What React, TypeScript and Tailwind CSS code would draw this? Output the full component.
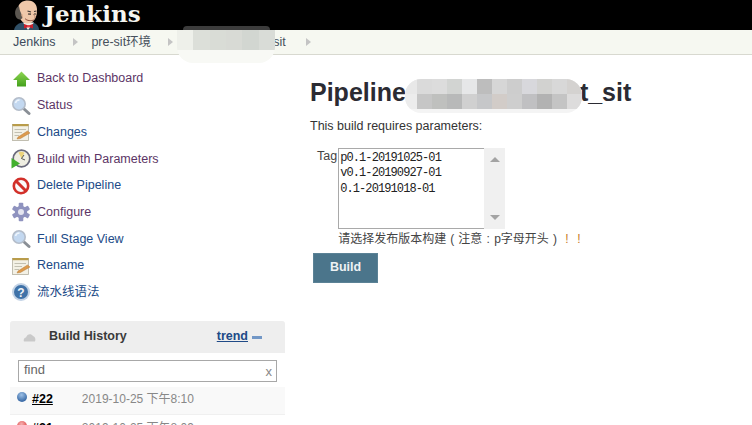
import React from 'react';

const SANS = "font-['Liberation_Sans','Noto_Sans_CJK_SC',sans-serif]";

const Logo = () => (
  <svg width="27" height="30" viewBox="0 0 27 30" className="shrink-0">
    <path d="M1 30 C2 25 6 22.5 11 22.5 L19 22.5 C23 23 26 26 26 30 Z" fill="#2f4f66" />
    <path d="M10 22.5 L15 30 L21 22.5 Z" fill="#f0efe8" />
    <path d="M5 9 C5 3 10 0.5 15 0.5 C21 0.5 24.5 5 24 11 C24 18 20 24 14 23.5 C9 23 6.5 19 6 15 C5 13 5 11 5 9 Z" fill="#efc8aa" />
    <path d="M3 17 C1 12 2.5 8 6 6 C6.5 9 7 11 8 13 L9.5 18 C8 20 4.5 20 3 17 Z" fill="#5b5650" />
    <path d="M9.5 14 C8 14.5 8 17 10 17.5 Z" fill="#d9a888" />
    <path d="M14.5 11 L18 12 M21 11.5 L23.5 11" stroke="#3a3633" strokeWidth="1.1" fill="none" />
    <path d="M15 14 L18 14.2" stroke="#2c2724" strokeWidth="1.2" />
    <circle cx="22" cy="14" r="0.8" fill="#222" />
    <path d="M20 14 C22 16 23 17.5 21 18.5" stroke="#b27f68" strokeWidth="1" fill="none" />
    <path d="M12 18.5 C14 21 18 21 21 20" stroke="#8c4f3e" strokeWidth="1" fill="none" />
    <path d="M11 24 L15.5 25.5 L20 24 L20 28.5 L15.5 27 L11 28.5 Z" fill="#c9202c" />
    <circle cx="15.5" cy="26.2" r="1.2" fill="#e8424a" />
  </svg>
);

const ArrowUp = () => (
  <svg width="20" height="20" viewBox="0 0 20 20">
    <defs>
      <linearGradient id="arrow-fill" x1="0" y1="0" x2="0" y2="1">
        <stop offset="0" stopColor="#8fd653" />
        <stop offset="1" stopColor="#43a01c" />
      </linearGradient>
    </defs>
    <path d="M10.5 2.5 L19 11 L15 11 L15 17.5 L6 17.5 L6 11 L2 11 Z" fill="url(#arrow-fill)" />
  </svg>
);

const Search = () => (
  <svg width="20" height="20" viewBox="0 0 20 20">
    <path d="M12.5 12.5 L18 17.5" stroke="#8a8f96" strokeWidth="3" strokeLinecap="round" />
    <circle cx="8" cy="8" r="6.2" fill="#c3d8f0" stroke="#b4bdca" strokeWidth="1.6" />
    <path d="M4.5 7 C5 5 6.5 4 8.5 4" stroke="#eef5fc" strokeWidth="1.5" fill="none" />
  </svg>
);

const Notepad = () => (
  <svg width="20" height="20" viewBox="0 0 20 20">
    <rect x="1.5" y="2.5" width="16" height="16" fill="#f3f1e6" stroke="#b3b0a0" strokeWidth="0.8" />
    <rect x="1.5" y="2" width="16" height="2.2" fill="#b99c4a" />
    <path d="M3.5 7.5 H15 M3.5 10.5 H11 M3.5 13.5 H8" stroke="#c2c0b2" strokeWidth="1" />
    <path d="M7 15 L16.5 9 L19 11 L9.5 16.5 L6 17 Z" fill="#dd9a4c" stroke="#a96e2e" strokeWidth="0.4" />
  </svg>
);

const Clock = () => (
  <svg width="20" height="20" viewBox="0 0 20 20">
    <circle cx="10.5" cy="9.5" r="8.3" fill="#efeee2" stroke="#6a6a7c" strokeWidth="1.7" />
    <path d="M10.5 9.5 L7.5 3.5 A6.5 6.5 0 0 1 13.5 3.8 Z" fill="#ecd37a" />
    <path d="M10.5 9.5 L13 6 M10.5 9.5 L14 11" stroke="#444" strokeWidth="0.9" />
    <path d="M0.5 9 L9 14.5 L0.5 19.5 Z" fill="#42b02e" />
  </svg>
);

const NoEntry = () => (
  <svg width="20" height="20" viewBox="0 0 20 20">
    <circle cx="10" cy="10" r="7.2" fill="#fbfbfb" stroke="#d2302a" strokeWidth="2.6" />
    <path d="M5 5 L15 15" stroke="#d2302a" strokeWidth="3" />
  </svg>
);

const Gear = () => (
  <svg width="20" height="20" viewBox="0 0 20 20">
    <g fill="#8f93bf">
      <rect x="7.7" y="0.8" width="4.6" height="18.4" rx="1" />
      <rect x="7.7" y="0.8" width="4.6" height="18.4" rx="1" transform="rotate(60 10 10)" />
      <rect x="7.7" y="0.8" width="4.6" height="18.4" rx="1" transform="rotate(120 10 10)" />
    </g>
    <circle cx="10" cy="10" r="6.2" fill="#8f93bf" />
    <circle cx="10" cy="10" r="3" fill="#e4e5f0" />
  </svg>
);

const Help = () => (
  <svg width="20" height="20" viewBox="0 0 20 20">
    <circle cx="10" cy="10" r="9" fill="#c3d3e6" />
    <circle cx="10" cy="10" r="7" fill="#3f72a8" />
    <text x="10" y="14.5" textAnchor="middle" fontSize="12" fontWeight="700" fill="#f1f4f8" fontFamily="Liberation Sans">?</text>
  </svg>
);

const Sep = ({ className }: { className: string }) => (
  <span className={`h-0 w-0 border-y-[4px] border-l-[5px] border-y-transparent border-l-[#c4c4c4] ${className}`} />
);

const navItems: { icon: React.ReactNode; label: string; color: string }[] = [
  { icon: <ArrowUp />, label: 'Back to Dashboard', color: 'text-[#5c3566]' },
  { icon: <Search />, label: 'Status', color: 'text-[#5c3566]' },
  { icon: <Notepad />, label: 'Changes', color: 'text-[#204a87]' },
  { icon: <Clock />, label: 'Build with Parameters', color: 'text-[#5c3566]' },
  { icon: <NoEntry />, label: 'Delete Pipeline', color: 'text-[#204a87]' },
  { icon: <Gear />, label: 'Configure', color: 'text-[#5c3566]' },
  { icon: <Search />, label: 'Full Stage View', color: 'text-[#204a87]' },
  { icon: <Notepad />, label: 'Rename', color: 'text-[#204a87]' },
  { icon: <Help />, label: '流水线语法', color: 'text-[#204a87]' },
];

const crumbBlur = [
  'bg-[#eef0ea]',
  'bg-[#dcdfd9]',
  'bg-[#d9dcd6]',
  'bg-[#d8dad5]',
  'bg-[#d2d6d1]',
  'bg-[#d9dcd7]',
];

const titleBlurTop = [
  'bg-[#dadada]', 'bg-[#dcdcdc]', 'bg-[#d2d4d2]', 'bg-[#e6e7e8]', 'bg-[#bdbdbd]', 'bg-[#d6d6d6]',
  'bg-[#cdcdcd]', 'bg-[#d8d8dc]', 'bg-[#d2d2d0]', 'bg-[#d8d8d8]', 'bg-[#d4d2d0]',
];
const titleBlurBottom = [
  'bg-[#c6c6c6]', 'bg-[#bfc0be]', 'bg-[#b8b9b9]', 'bg-[#d0d0d0]', 'bg-[#c6c7c9]', 'bg-[#d2ccc8]',
  'bg-[#cecece]', 'bg-[#c0c0c2]', 'bg-[#b2b2b2]', 'bg-[#c4c4c4]', 'bg-[#dddcdc]',
];

export default function App() {
  return (
    <div className={`relative h-[425px] w-[752px] overflow-hidden bg-white text-[#333] ${SANS}`}>
      <header className="flex h-[30px] items-center gap-[4px] overflow-hidden bg-black pl-[13px]">
        <Logo />
        <span className="mb-[3px] font-['DejaVu_Serif',serif] text-[23px] font-bold leading-none text-[#f5f5f0]">Jenkins</span>
      </header>

      <nav className="flex h-[25px] items-center border-b border-[#d8d9d0] bg-[#f6f8f1] pl-[13px] text-[12.5px] text-[#444]">
        <span className="text-[#3c4a5c]">Jenkins</span>
        <Sep className="ml-[18px]" />
        <span className="ml-[13px] text-[#47505c]">pre-sit环境</span>
        <Sep className="ml-[17px]" />
        <span className="ml-[100px] text-[#47505c]">sit</span>
        <Sep className="ml-[20px]" />
      </nav>

      <div className="flex">
        <aside className="w-[285px] shrink-0 pl-[10px]">
          <ul className="pt-[10.5px]">
            {navItems.map((item) => (
              <li key={item.label} className="flex h-[26.7px] items-center gap-[6px] pl-px">
                {item.icon}
                <span className={`text-[12.5px] ${item.color}`}>{item.label}</span>
              </li>
            ))}
          </ul>

          <section className="mt-[15.5px] overflow-hidden rounded-t-[3px] bg-[#f9f9f9]">
            <div className="flex h-[32px] items-center bg-[#eeeeee] pb-[2px] pl-[13px] pr-[23px]">
              <svg width="13" height="10" viewBox="0 0 13 10" className="mt-px">
                <path d="M1 9.5 C0 7 2 5.5 3 5.5 C4 2 8 1 10 4 C12 4.5 13 7 12 9.5 Z" fill="#c9c9c9" />
              </svg>
              <span className="ml-[13px] text-[12.5px] font-bold text-[#3a3a3a]">Build History</span>
              <a className="ml-auto text-[12.5px] font-bold text-[#204a87] underline">trend</a>
              <span className="ml-[4px] mt-[3px] h-[3px] w-[10px] bg-[#7297c6]" />
            </div>
            <div className="flex h-[34px] items-start bg-white px-[8px] pt-[7px]">
              <div className="flex h-[22px] w-full items-center justify-between border border-[#a8a8a8] pb-[2px] pl-[5px] pr-[4px] text-[13px] text-[#666]">
                <span>find</span>
                <span className="mt-[3px] text-[#888]">x</span>
              </div>
            </div>
            <div className="flex h-[27px] items-start pl-[7px] pt-[3px] text-[12.5px]">
              <span className="mt-[2px] h-[10px] w-[10px] rounded-full bg-[radial-gradient(circle_at_45%_30%,#9dc0e6,#3d6da8_70%)]" />
              <a className="ml-[5px] font-bold text-black underline">#22</a>
              <span className="ml-[29px] text-[12px] text-[#888]">2019-10-25 下午8:10</span>
            </div>
            <div className="flex h-[28px] items-start border-t border-[#f0f0f0] bg-white pl-[7px] pt-[4px] text-[12.5px]">
              <span className="mt-[2px] h-[10px] w-[10px] rounded-full bg-[radial-gradient(circle_at_45%_30%,#f5b0b0,#e04848_70%)]" />
              <a className="ml-[5px] font-bold text-black underline">#21</a>
              <span className="ml-[29px] text-[12px] text-[#888]">2019-10-25 下午8:09</span>
            </div>
          </section>
        </aside>

        <main className="pl-[25px]">
          <h1 className="mt-[22px] flex h-[32px] items-center text-[25px] font-bold text-[#2b2b33]">
            <span>Pipeline</span>
            <span className="ml-[174px]">t_sit</span>
          </h1>
          <p className="mt-[8px] text-[12.5px] text-[#333]">This build requires parameters:</p>

          <div className="mt-[12px] flex items-start pl-[7px]">
            <span className="mt-px text-[12.5px] leading-[15px] text-[#444]">Tag</span>
            <div className="ml-px">
              <div className="flex h-[81px] w-[167px]">
                <div className="w-[146px] border border-r-0 border-[#a9a9a9] bg-white pl-px pt-[2px] font-['Liberation_Mono','Noto_Sans_CJK_SC',monospace] text-[12px] leading-[15.5px] tracking-[-0.9px] text-[#222]">
                  <div>p0.1-20191025-01</div>
                  <div>v0.1-20190927-01</div>
                  <div>0.1-20191018-01</div>
                </div>
                <div className="flex w-[21px] flex-col items-center justify-between bg-[#f0f0f0] py-[9px]">
                  <span className="h-0 w-0 border-x-[5px] border-b-[5px] border-x-transparent border-b-[#a3a3a3]" />
                  <span className="h-0 w-0 border-x-[5px] border-t-[5px] border-x-transparent border-t-[#a3a3a3]" />
                </div>
              </div>
              <p className="mt-[2px] flex text-[12px] leading-[16px] text-[#444]">
                <span>请选择发布版本构建</span>
                <span className="w-[12px] text-center">(</span>
                <span>注意</span>
                <span className="w-[12px] text-center">:</span>
                <span>p字母开头</span>
                <span className="w-[12px] text-center">)</span>
                <span className="w-[12px] text-center text-[#c77a1e]">!</span>
                <span className="w-[12px] text-center text-[#c77a1e]">!</span>
              </p>
            </div>
          </div>

          <button className="ml-[3px] mt-[6px] h-[30px] w-[65px] border border-[#5b8296] bg-[#4b758b] text-[12.5px] font-bold text-[#eef2f4]">
            Build
          </button>
        </main>
      </div>

      <div className="absolute left-[183px] top-[26px] h-[4px] w-[87px] rounded-t-[12px] bg-[#3c3c3c]" />
      <div className="absolute left-[177px] top-[30px] flex h-[33px] w-[98px] flex-col overflow-hidden rounded-b-[16px] bg-[#f8f9f5]">
        <div className="grid h-[20px] grid-cols-6">
          {crumbBlur.map((c, i) => (
            <div key={i} className={c} />
          ))}
        </div>
      </div>

      <div className="absolute left-[405px] top-[79px] h-[34px] w-[177px] overflow-hidden rounded-[16px] bg-[#f4f4f4]">
        <div className="grid h-[15px] grid-cols-[12px_repeat(11,15px)]">
          <div className="bg-[#e8e8e8]" />
          {titleBlurTop.map((c, i) => (
            <div key={i} className={c} />
          ))}
        </div>
        <div className="grid h-[15px] grid-cols-[12px_repeat(11,15px)]">
          <div className="bg-[#ececec]" />
          {titleBlurBottom.map((c, i) => (
            <div key={i} className={c} />
          ))}
        </div>
      </div>
    </div>
  );
}
